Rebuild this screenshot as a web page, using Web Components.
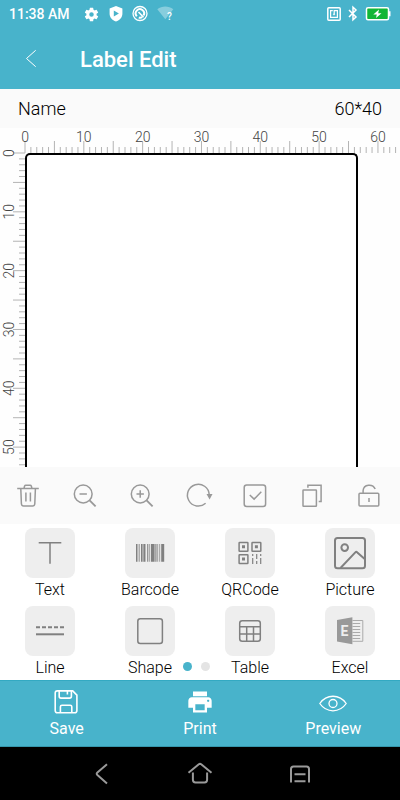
<!DOCTYPE html>
<html lang="en">
<head>
<meta charset="utf-8">
<meta name="viewport" content="width=device-width, initial-scale=1">
<title>Label Edit</title>
<style>
  body {
    margin: 0;
    font-family: Roboto, "Liberation Sans", sans-serif;
    background: #fff;
    color: #000;
  }
</style>
</head>
<body>
<label-app></label-app>

<script>
// name: [width, height, markup]
const icons = {
  gear: [17, 17, '<path transform="scale(.7083)" fill="currentColor" d="M19.14 12.94c.04-.3.06-.61.06-.94 0-.32-.02-.64-.07-.94l2.03-1.58a.49.49 0 0 0 .12-.61l-1.92-3.32a.49.49 0 0 0-.59-.22l-2.39.96a7 7 0 0 0-1.62-.94l-.36-2.54a.48.48 0 0 0-.48-.41h-3.84a.48.48 0 0 0-.47.41l-.36 2.54c-.59.24-1.13.57-1.62.94l-2.39-.96a.48.48 0 0 0-.59.22L2.74 8.87a.48.48 0 0 0 .12.61l2.03 1.58c-.05.3-.09.63-.09.94s.02.64.07.94l-2.03 1.58a.49.49 0 0 0-.12.61l1.92 3.32c.12.22.37.29.59.22l2.39-.96c.5.38 1.03.7 1.62.94l.36 2.54c.05.24.24.41.48.41h3.84c.24 0 .44-.17.47-.41l.36-2.54c.59-.24 1.13-.56 1.62-.94l2.39.96c.22.08.47 0 .59-.22l1.92-3.32a.48.48 0 0 0-.12-.61zM12 15.2a3.2 3.2 0 1 1 0-6.4 3.2 3.2 0 0 1 0 6.4z"/>'],
  shield: [14, 16, '<path fill="currentColor" fill-rule="evenodd" d="M7 0 13.400 2.400v5.400c0 3.600-2.600 6.400-6.400 7.700C3.200 14.200.6 11.400.6 7.800V2.400zM4.800 4.600v6L9.900 7.600z"/>'],
  data: [16, 16, '<g fill="none" stroke="currentColor"><circle cx="8" cy="7.500" r="7" stroke-width="1.300"/><path stroke-width="2" d="M4.800 10.300A4.200 4.200 0 1 1 11.500 9.600M10.200 11.200a4.200 4.200 0 0 1-3.400.3"/><path stroke-width="1.600" d="M6.500 6l5 5.200"/></g>'],
  wifi: [18, 16, '<path fill="currentColor" opacity=".35" d="M.3 3.200C5-.4 11.500-.4 16.300 3.200L8.300 13.300z"/><text x="10" y="14" font-size="10" font-weight="500" fill="currentColor">?</text>'],
  nfc: [14, 14, '<g fill="none" stroke="currentColor"><rect x=".8" y=".8" width="12.400" height="12.400" rx="1" stroke-width="1.500"/><path stroke-width="1.200" d="M5.800 3.600H3.600v6.800h6.800V3.600H7.200v4"/><circle cx="7" cy="7.400" r=".6"/></g>'],
  bluetooth: [10, 16, '<path fill="none" stroke="currentColor" stroke-width="1.500" d="M1 4l7 7L5 13.800V1.200l3 2.800-7 7"/>'],
  battery: [26, 14, '<rect x="1.500" y=".8" width="22" height="12" rx="1.500" fill="#12b636" stroke="currentColor" stroke-width="1.500"/><path fill="currentColor" d="M24 4.300H25.500v5H24zM14 2.600 8.300 7.500h3.500L11 11 16.500 6.200h-3.300z"/>'],
  back: [12, 18, '<path fill="none" stroke="currentColor" stroke-width="1" d="M10.700.3 1.500 8.500l9.200 8.200"/>'],

  trash: [24, 24, '<path d="M1.200 4.500h21.600M8 4.200l.6-2.200q.3-.8 1.200-.8h4.300q.9 0 1.200.8l.6 2.200M4.800 4.800l.6 15q.2 2.200 2.200 2.200h9q2 0 2.200-2.200l.6-15M9.900 8.600v9M14.400 8.600v9"/>'],
  zoomOut: [24, 24, '<circle cx="10.200" cy="10" r="8.900"/><path d="M6.500 10h7.400"/><path stroke-width="1.800" d="M16.600 16.400l6 6"/>'],
  zoomIn: [24, 24, '<circle cx="10.200" cy="10" r="8.900"/><path d="M6.500 10h7.400M10.200 6.300v7.400"/><path stroke-width="1.800" d="M16.600 16.400l6 6"/>'],
  rotate: [24, 24, '<path d="M23.200 10.500A10.900 10.900 0 1 0 19.600 19.300"/><path fill="currentColor" stroke="none" d="M20.500 10h6L23.600 15.500z"/>'],
  check: [24, 24, '<rect x="1.200" y="1" width="21.400" height="21.400" rx="2.500"/><path d="M6.800 11l4.300 4.100L18.300 7.700"/>'],
  copy: [24, 24, '<rect x="3" y="6" width="13.400" height="16.300" rx=".5"/><path d="M7.900 3.800V1.300h13.200v16.200h-2.400"/>'],
  unlock: [24, 24, '<rect x="2" y="9.300" width="19.800" height="12.800" rx="1"/><path d="M6.100 9.100V6.600C6.600 0 15.800-.6 18.200 5M12 14v4"/>'],

  text: [50, 50, '<path d="M13.700 14.700h22.600M25 14.700v21"/>'],
  barcode: [50, 50, '<path fill="currentColor" stroke="none" d="M11 16h1.500v17.700H11zM16 16h1v17.700h-1zM18.500 16h1.500v17.700h-1.500zM22 16h.8v17.700H22zM26 16h3v17.700h-3zM30.500 16h1v17.700h-1zM36.200 16h3v17.700h-3z"/><path fill="currentColor" stroke="none" opacity=".6" d="M13.500 16h1.500v17.700h-1.500zM17 16h1.500v17.700H17zM20 16h.8v17.700H20zM23.500 16h1.700v17.700h-1.700zM29 16h1.500v17.700H29zM32 16h1v17.700h-1zM33.800 16h1.400v17.700h-1.400z"/>'],
  qr: [50, 50, '<rect x="14.100" y="14.400" width="8.800" height="8.800" rx=".5"/><rect x="27" y="14.400" width="8.800" height="8.800" rx=".5"/><rect x="14.100" y="26.700" width="8.800" height="8.800" rx=".5"/><path fill="currentColor" stroke="none" d="M17 17.300h3v3h-3zM29.900 17.300h3v3h-3zM17 29.600h3v3h-3z"/><path stroke-width="1.200" d="M27.700 26v2M27.700 30v6M31.700 26v5M31.700 33v3M35.700 26v2M35.700 30v6"/>'],
  picture: [50, 50, '<g stroke-width="2"><rect x="10" y="10" width="30" height="30.300" rx="2.500"/><circle cx="19.700" cy="19.600" r="3.300"/><path d="M15.500 40 30.300 24.400q1-1 2 0L40 31.300"/></g>'],
  line: [50, 50, '<path stroke-width="2" stroke-dasharray="4 2" d="M11 21.300h28"/><path stroke-width="2" d="M11 28.300h28"/>'],
  shape: [50, 50, '<rect x="12.800" y="12.800" width="24.600" height="24.600" rx="2.500"/>'],
  table: [50, 50, '<rect x="14.700" y="14.700" width="20.600" height="20.600" rx="2.500"/><path d="M14.700 20.800h20.600M14.700 28h20.600M21.700 20.800v14.500M28.500 20.800v14.500"/>'],
  excel: [50, 50, '<path fill="#999" stroke="none" d="M12 14l15.400-2.700v27L12 35.500z"/><path stroke="#aaa" stroke-width="1" d="M27.400 14.500h10.400v20.800H27.400M27.400 17.500h7.800M27.400 20.500h7.800M27.400 23.500h7.800M27.400 26.500h7.800M27.400 29.500h7.800M27.400 32.500h7.800"/><text x="15.500" y="30" font-size="14" font-weight="700" fill="#eee" stroke="none">E</text>'],

  save: [28, 28, '<g fill="none" stroke="currentColor" stroke-width="1.600"><path d="M4.400 2.900h15.300l4.200 4.300v15.300q0 2.300-2.300 2.300H4.400q-2.200 0-2.200-2.300V5.100q0-2.200 2.200-2.200z"/><path d="M6.200 3v5.300q0 1.800 1.800 1.800h8.600q1.800 0 1.800-1.800V3M7.400 24.500v-5.700q0-1.600 1.600-1.600h8.200q1.600 0 1.600 1.600v5.700M14.400 3v3.500"/></g>'],
  print: [28, 28, '<path transform="scale(1.1667)" fill="currentColor" d="M19 8H5c-1.660 0-3 1.340-3 3v6h4v4h12v-4h4v-6c0-1.660-1.340-3-3-3zm-3 11H8v-5h8v5zm3-7c-.55 0-1-.45-1-1s.45-1 1-1 1 .45 1 1-.45 1-1 1zm-1-9H6v4h12V3z"/>'],
  eye: [28, 28, '<g fill="none" stroke="currentColor" stroke-width="1.300"><path d="M.8 15.500C7.500 5.800 20.500 5.800 27.200 15.500 20.500 25.200 7.500 25.200.8 15.500z"/><circle cx="14" cy="15.500" r="4"/></g>'],

  navBack: [28, 28, '<path d="M21 4.300l-9.600 8.200q-1.400 1.300 0 2.600l9.600 8.300"/>'],
  navHome: [28, 28, '<path d="M2.500 12.700 12.800 4.300q1.200-.9 2.400 0l10.300 8.400M6.900 12.500v7.300q0 2.600 2.600 2.600h9q2.600 0 2.600-2.600v-7.300"/>'],
  navMenu: [28, 28, '<path d="M5 22.500V9q0-2.500 2.500-2.500h13Q23 6.500 23 9v13.500M8.500 14.200h11M8.500 21.200h11"/>']
};

class UiIcon extends HTMLElement {
  constructor() {
    super();
    this.attachShadow({mode: 'open'});
  }

  connectedCallback() {
    const [w, h, art] = icons[this.getAttribute('name')];
    this.shadowRoot.innerHTML = `
    <style>
      :host { display: block; flex: none; }
      svg { display: block; overflow: visible; }
    </style>
    <svg width="${w}" height="${h}" viewBox="0 0 ${w} ${h}" aria-hidden="true"
      fill="${this.hasAttribute('outline') ? 'none' : 'currentColor'}"
      ${this.hasAttribute('outline') ? 'stroke="currentColor"' : ''}
      stroke-width="${this.getAttribute('outline') || 1}">${art}</svg>
    `;
  }
}
customElements.define('ui-icon', UiIcon);

class StatusBar extends HTMLElement {
  constructor() {
    super();
    this.attachShadow({mode: 'open'}).innerHTML = `
    <style>
      :host {
        display: flex;
        align-items: center;
        height: 28px;
        padding: 0 9px;
        background: #48b3cb;
        color: #fff;
        font-size: 14px;
        font-weight: 500;
      }
      .group { display: flex; align-items: center; gap: 9px; }
      .left { margin-left: 13px; }
      .right { margin-left: auto; gap: 7px; }
    </style>
    <span><slot></slot></span>
    <div class="group left">
      <ui-icon name="gear"></ui-icon>
      <ui-icon name="shield"></ui-icon>
      <ui-icon name="data"></ui-icon>
      <ui-icon name="wifi"></ui-icon>
    </div>
    <div class="group right">
      <ui-icon name="nfc"></ui-icon>
      <ui-icon name="bluetooth"></ui-icon>
      <ui-icon name="battery"></ui-icon>
    </div>
    `;
  }
}
customElements.define('status-bar', StatusBar);

class AppHeader extends HTMLElement {
  constructor() {
    super();
    this.attachShadow({mode: 'open'}).innerHTML = `
    <style>
      :host {
        display: flex;
        align-items: center;
        height: 61px;
        background: #48b3cb;
        color: #fff;
      }
      button {
        display: flex;
        box-sizing: border-box;
        width: 80px;
        padding: 12px 25px;
        border: 0;
        background: none;
        color: inherit;
      }
      h1 { margin: 0; padding-top: 2px; font-size: 22px; line-height: 28px; font-weight: 500; }
    </style>
    <button aria-label="Back"><ui-icon name="back"></ui-icon></button>
    <h1><slot></slot></h1>
    `;
  }
}
customElements.define('app-header', AppHeader);

class LabelInfo extends HTMLElement {
  constructor() {
    super();
    this.attachShadow({mode: 'open'}).innerHTML = `
    <style>
      :host {
        display: flex;
        justify-content: space-between;
        align-items: center;
        height: 39px;
        padding: 0 18px;
        background: #fafafa;
        font-size: 18px;
        font-weight: 300;
      }
    </style>
    <span><slot></slot></span>
    <span><slot name="size"></slot></span>
    `;
  }
}
customElements.define('label-info', LabelInfo);

// 17 millimetres take 100 pixels
const MM = 100 / 17;

class RulerScale extends HTMLElement {
  constructor() {
    super();
    this.attachShadow({mode: 'open'});
  }

  connectedCallback() {
    const vertical = this.hasAttribute('vertical');
    const count = Number(this.getAttribute('count'));
    let marks = '';
    for (let i = 0; i <= count; i++) {
      const at = i * MM;
      const from = i % 5 ? 19 : 13;
      marks += vertical
        ? `<path d="M${from} ${at}H25"/>`
        : `<path d="M${at} ${from}V25"/>`;
      if (i % 10 === 0) {
        marks += vertical
          ? `<text transform="translate(14 ${at}) rotate(-90)">${i}</text>`
          : `<text x="${at}" y="14">${i}</text>`;
      }
    }
    this.shadowRoot.innerHTML = `
    <style>
      :host { display: block; min-width: 0; min-height: 0; }
      svg { display: block; overflow: visible; }
      path { stroke: #b4b4b4; stroke-width: 1; }
      text { font-size: 14px; font-weight: 300; fill: #444; text-anchor: middle; }
    </style>
    <svg width="25" height="25">${marks}</svg>
    `;
  }
}
customElements.define('ruler-scale', RulerScale);

class LabelCanvas extends HTMLElement {
  constructor() {
    super();
    this.attachShadow({mode: 'open'}).innerHTML = `
    <style>
      :host {
        display: grid;
        grid-template: 25px minmax(0, 1fr) / 25px minmax(0, 1fr);
        flex: 1;
        min-height: 0;
        overflow: hidden;
        background: #fefefe;
      }
      .top { grid-column: 2; }
      .sheet {
        margin-right: 42px;
        border: 2px solid #000;
        border-bottom: 0;
        border-radius: 5px 5px 0 0;
        background: #fff;
      }
    </style>
    <ruler-scale class="top" count="63"></ruler-scale>
    <ruler-scale vertical count="53"></ruler-scale>
    <div class="sheet"></div>
    `;
  }
}
customElements.define('label-canvas', LabelCanvas);

class EditTools extends HTMLElement {
  constructor() {
    super();
    const tools = [
      ['trash', 'Delete'], ['zoomOut', 'Zoom out'], ['zoomIn', 'Zoom in'], ['rotate', 'Rotate'],
      ['check', 'Select'], ['copy', 'Copy'], ['unlock', 'Lock']
    ];
    this.attachShadow({mode: 'open'}).innerHTML = `
    <style>
      :host {
        display: grid;
        grid-template-columns: repeat(7, 1fr);
        height: 57px;
        padding-right: 3px;
        background: #fafafa;
      }
      button {
        display: flex;
        align-items: center;
        justify-content: center;
        padding: 0;
        border: 0;
        background: none;
        color: #999;
      }
    </style>
    ${tools.map(([name, label]) => `
      <button aria-label="${label}"><ui-icon name="${name}" outline="1.500"></ui-icon></button>`).join('')}
    `;
  }
}
customElements.define('edit-tools', EditTools);

class PaletteItem extends HTMLElement {
  constructor() {
    super();
    this.attachShadow({mode: 'open'});
  }

  connectedCallback() {
    this.shadowRoot.innerHTML = `
    <style>
      :host { display: block; }
      button {
        display: flex;
        flex-direction: column;
        align-items: center;
        width: 100%;
        padding: 0;
        border: 0;
        background: none;
        color: inherit;
        font: 300 16px/24px Roboto, "Liberation Sans", sans-serif;
      }
      ui-icon { border-radius: 8px; background: #eee; color: #808080; }
    </style>
    <button><ui-icon name="${this.getAttribute('icon')}" outline="1.500"></ui-icon><slot></slot></button>
    `;
  }
}
customElements.define('palette-item', PaletteItem);

class ItemPalette extends HTMLElement {
  constructor() {
    super();
    this.attachShadow({mode: 'open'}).innerHTML = `
    <style>
      :host {
        display: grid;
        grid-template-columns: repeat(4, 1fr);
        row-gap: 4px;
        position: relative;
        padding: 4px 0 0;
      }
      /* page dots lie over the last row */
      .dots {
        position: absolute;
        left: 0;
        right: 8px;
        bottom: 9px;
        display: flex;
        justify-content: center;
        gap: 9px;
      }
      .dots i { width: 9px; height: 9px; border-radius: 50%; background: #e4e4e4; }
      .dots .on { background: #48b3cb; }
    </style>
    <slot></slot>
    <div class="dots"><i class="on"></i><i></i></div>
    `;
  }
}
customElements.define('item-palette', ItemPalette);

class ActionButton extends HTMLElement {
  constructor() {
    super();
    this.attachShadow({mode: 'open'});
  }

  connectedCallback() {
    this.shadowRoot.innerHTML = `
    <style>
      :host { display: block; flex: 1; }
      button {
        display: flex;
        flex-direction: column;
        align-items: center;
        gap: 3px;
        width: 100%;
        padding: 8px 0;
        border: 0;
        background: none;
        color: #fff;
        font: 16px/20px Roboto, "Liberation Sans", sans-serif;
      }
    </style>
    <button><ui-icon name="${this.getAttribute('icon')}"></ui-icon><slot></slot></button>
    `;
  }
}
customElements.define('action-button', ActionButton);

class ActionBar extends HTMLElement {
  constructor() {
    super();
    this.attachShadow({mode: 'open'}).innerHTML = `
    <style>
      :host {
        display: flex;
        background: #48b3cb;
        box-shadow: inset 0 1px #33a9c2, inset 0 -1px #3596ab;
      }
    </style>
    <slot></slot>
    `;
  }
}
customElements.define('action-bar', ActionBar);

class SystemNav extends HTMLElement {
  constructor() {
    super();
    this.attachShadow({mode: 'open'}).innerHTML = `
    <style>
      :host {
        display: flex;
        justify-content: space-around;
        align-items: center;
        height: 53px;
        padding: 0 50px;
        background: #000;
      }
      button { padding: 0; border: 0; background: none; color: #9a9a9a; }
    </style>
    <button aria-label="Back"><ui-icon name="navBack" outline="2"></ui-icon></button>
    <button aria-label="Home"><ui-icon name="navHome" outline="2"></ui-icon></button>
    <button aria-label="Recent apps"><ui-icon name="navMenu" outline="2"></ui-icon></button>
    `;
  }
}
customElements.define('system-nav', SystemNav);

class LabelApp extends HTMLElement {
  constructor() {
    super();
    this.attachShadow({mode: 'open'}).innerHTML = `
    <style>
      :host { display: flex; flex-direction: column; height: 100vh; }
      status-bar, app-header, label-info, edit-tools, item-palette, action-bar, system-nav { flex: none; }
    </style>
    <status-bar>11:38 AM</status-bar>
    <app-header>Label Edit</app-header>
    <label-info>Name<span slot="size">60*40</span></label-info>
    <label-canvas></label-canvas>
    <edit-tools></edit-tools>
    <item-palette>
      <palette-item icon="text">Text</palette-item>
      <palette-item icon="barcode">Barcode</palette-item>
      <palette-item icon="qr">QRCode</palette-item>
      <palette-item icon="picture">Picture</palette-item>
      <palette-item icon="line">Line</palette-item>
      <palette-item icon="shape">Shape</palette-item>
      <palette-item icon="table">Table</palette-item>
      <palette-item icon="excel">Excel</palette-item>
    </item-palette>
    <action-bar>
      <action-button icon="save">Save</action-button>
      <action-button icon="print">Print</action-button>
      <action-button icon="eye">Preview</action-button>
    </action-bar>
    <system-nav></system-nav>
    `;
  }
}
customElements.define('label-app', LabelApp);
</script>
</body>
</html>
